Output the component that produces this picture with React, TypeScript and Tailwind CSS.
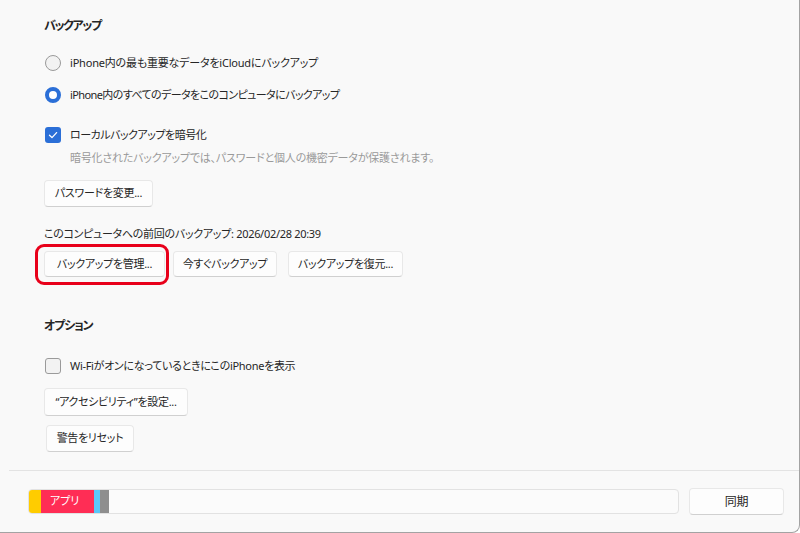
import type { ReactNode } from 'react'

const Btn = ({ children, className = '' }: { children: ReactNode; className?: string }) => (
  <button
    type="button"
    className={`flex items-center justify-center whitespace-nowrap rounded-[4px] border border-[#e8e8e8] border-b-[#d0d0d0] bg-[#fdfdfd] text-[11px] tracking-[-0.3px] text-[#262626] ${className}`}
  >
    {children}
  </button>
)

const Radio = ({ checked }: { checked?: boolean }) =>
  checked ? (
    <span className="h-[16px] w-[16px] shrink-0 rounded-full border-[4px] border-[#2b6fd7] bg-white" />
  ) : (
    <span className="h-[16px] w-[16px] shrink-0 rounded-full border border-[#9a9a9a] bg-[#f2f2f2]" />
  )

const Check = ({ checked }: { checked?: boolean }) =>
  checked ? (
    <span className="flex h-[16px] w-[16px] shrink-0 items-center justify-center rounded-[3px] bg-[#2b6fd7]">
      <svg width="10" height="10" viewBox="0 0 10 10" fill="none">
        <path d="M1.5 5.2 L4 7.6 L8.6 2.6" stroke="white" strokeWidth="1.3" strokeLinecap="round" strokeLinejoin="round" />
      </svg>
    </span>
  ) : (
    <span className="h-[16px] w-[16px] shrink-0 rounded-[3px] border border-[#9a9a9a] bg-[#f2f2f2]" />
  )

export default function App() {
  return (
    <div className="flex h-[533px] w-[800px] flex-col overflow-hidden rounded-br-[8px] border-r border-b border-[#a3a3a3] bg-[#f9f9f9] font-['Noto_Sans','Noto_Sans_CJK_JP',sans-serif] text-[#262626] [font-feature-settings:'palt']">
      <div className="flex flex-1 flex-col pl-[44px]">
        <h2 className="mt-[17px] flex h-[18px] items-center text-[12px] font-bold tracking-[-1.4px]">バックアップ</h2>

        <label className="mt-[16px] flex h-[24px] items-center gap-[9px] pl-[1px] text-[11px] tracking-[-0.2px]">
          <Radio />
          iPhone内の最も重要なデータをiCloudにバックアップ
        </label>
        <label className="mt-[8px] flex h-[24px] items-center gap-[9px] pl-[1px] text-[11px] tracking-[-0.6px]">
          <Radio checked />
          iPhone内のすべてのデータをこのコンピュータにバックアップ
        </label>

        <label className="mt-[16px] flex h-[24px] items-center gap-[9px] pl-[1px] text-[11px] tracking-[-0.5px]">
          <Check checked />
          ローカルバックアップを暗号化
        </label>
        <p className="mt-[3px] flex h-[16px] items-center pl-[26px] text-[11px] tracking-[-0.2px] text-[#9a9a9a]">
          暗号化されたバックアップでは、パスワードと個人の機密データが保護されます。
        </p>

        <div className="mt-[14px] flex">
          <Btn className="h-[27px] w-[109px]">パスワードを変更...</Btn>
        </div>

        <p className="mt-[19px] flex h-[16px] items-center text-[11px] tracking-[-0.3px]">
          このコンピュータへの前回のバックアップ: 2026/02/28 20:39
        </p>

        <div className="mt-[9px] flex gap-[8px]">
          <div className="relative">
            <Btn className="h-[26px] w-[121px]">バックアップを管理...</Btn>
            <span className="pointer-events-none absolute -top-[7px] -right-[4px] -bottom-[8px] -left-[9px] rounded-[9px] border-[3px] border-[#e8001a]" />
          </div>
          <Btn className="h-[26px] w-[104px]">今すぐバックアップ</Btn>
          <Btn className="ml-[3px] h-[26px] w-[115px]">バックアップを復元...</Btn>
        </div>

        <h2 className="mt-[40px] flex h-[18px] items-center text-[12px] font-bold tracking-[-1.2px]">オプション</h2>

        <label className="mt-[19px] flex h-[24px] items-center gap-[9px] pl-[1px] text-[11px] tracking-[-0.3px]">
          <Check />
          Wi-FiがオンになっているときにこのiPhoneを表示
        </label>

        <div className="mt-[10px] flex">
          <Btn className="h-[28px] w-[144px]">“アクセシビリティ”を設定...</Btn>
        </div>
        <div className="mt-[9px] flex pl-[2px]">
          <Btn className="h-[27px] w-[88px]">警告をリセット</Btn>
        </div>
      </div>

      <div className="ml-[9px] h-[62px] border-t border-[#e3e3e3]">
        <div className="mt-[17px] flex items-center pl-[19px] pr-[15px]">
          <div className="flex h-[25px] w-[651px] overflow-hidden rounded-[4px] border border-[#e2e2e2] bg-[#fbfbfb]">
            <span className="w-[12px] bg-[#ffcc00]" />
            <span className="flex w-[53px] items-center bg-[#ff2d55] pl-[9px] text-[11px] text-white">アプリ</span>
            <span className="w-[6px] bg-[#5ac8fa]" />
            <span className="w-[9px] bg-[#8e8e8e]" />
          </div>
          <Btn className="ml-[10px] h-[27px] w-[95px] text-[12px]">同期</Btn>
        </div>
      </div>
    </div>
  )
}
